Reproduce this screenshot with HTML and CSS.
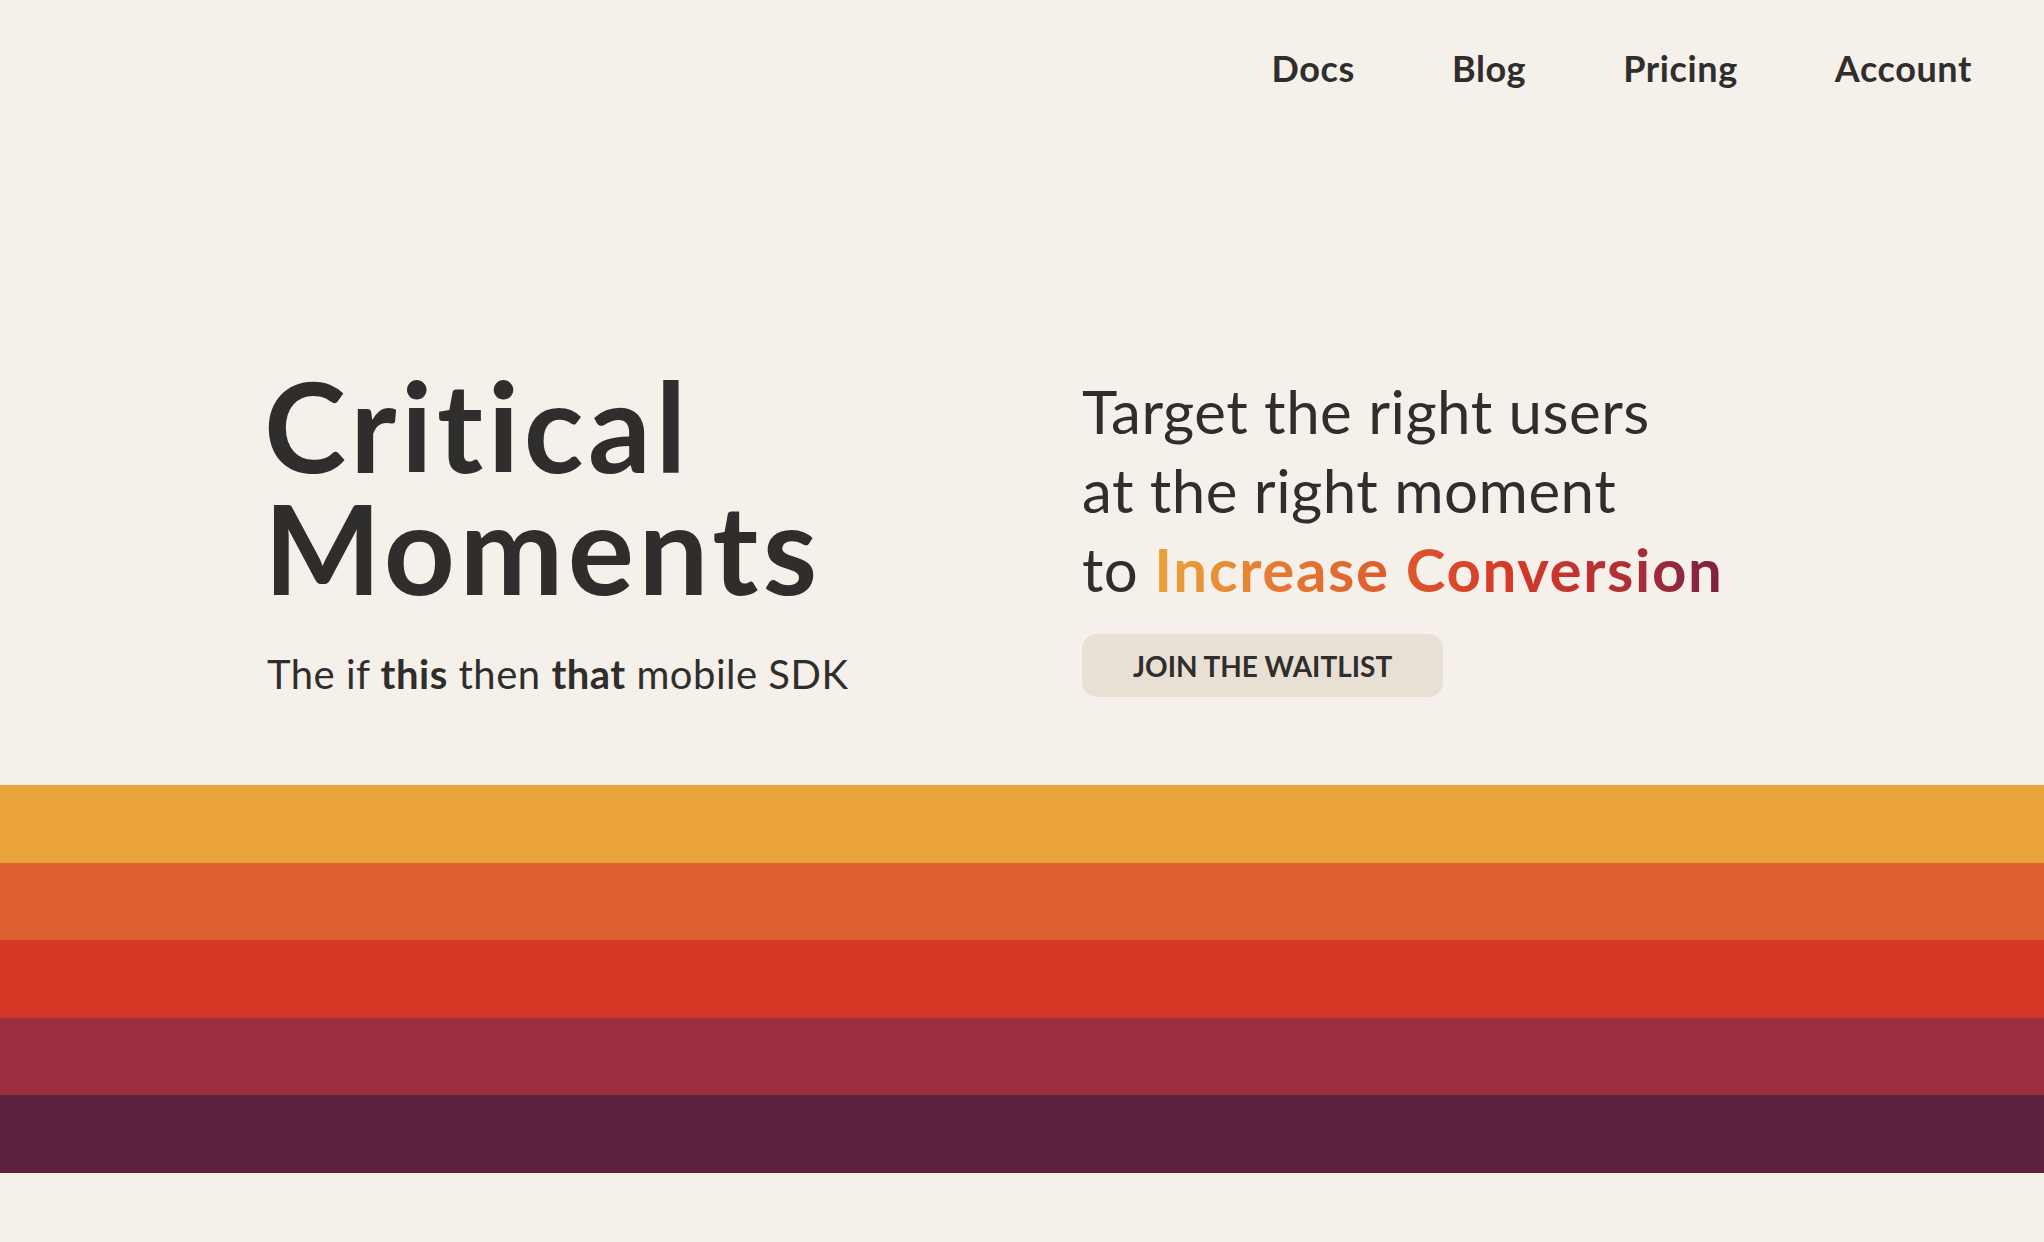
FILE: index.html
```html
<!DOCTYPE html>
<html lang="en">
<head>
<meta charset="utf-8">
<title>Critical Moments</title>
<link rel="stylesheet" href="styles.css">
</head>
<body>
<header class="site-header">
  <nav class="nav">
    <a class="nav-link" href="#">Docs</a>
    <a class="nav-link" href="#">Blog</a>
    <a class="nav-link" href="#">Pricing</a>
    <a class="nav-link" href="#">Account</a>
  </nav>
</header>
<main>
  <section class="hero">
    <div class="hero-left">
      <h1 class="title">Critical<br>Moments</h1>
      <p class="subtitle">The if <b>this</b> then <b>that</b> mobile SDK</p>
    </div>
    <div class="hero-right">
      <p class="pitch">Target the right users<br>at the right moment<br>to <span class="grad">Increase Conversion</span></p>
      <a class="btn" href="#">JOIN THE WAITLIST</a>
    </div>
  </section>
  <div class="stripes">
    <div class="stripe s1"></div>
    <div class="stripe s2"></div>
    <div class="stripe s3"></div>
    <div class="stripe s4"></div>
    <div class="stripe s5"></div>
  </div>
</main>
</body>
</html>
```
FILE: styles.css
```css
* { box-sizing: border-box; }
html, body { margin: 0; padding: 0; }
body {
  background: #f5f0ea;
  color: #2f2e2c;
  font-family: "Lato", "Noto Sans", sans-serif;
  font-variant-ligatures: none;
  min-height: 1242px;
}
.site-header {
  padding: 46px 72px 0 0;
}
.nav {
  display: flex;
  justify-content: flex-end;
  gap: 97px;
}
.nav-link {
  font-size: 36px;
  line-height: 44px;
  font-weight: 700;
  letter-spacing: 0.6px;
  color: #2f2e2c;
  text-decoration: none;
}
.hero {
  display: flex;
  align-items: flex-start;
  padding: 274px 0 87px 264px;
}
.hero-left {
  width: 818px;
  flex: none;
}
.title {
  margin: 0;
  font-size: 124px;
  line-height: 122px;
  font-weight: 700;
  letter-spacing: 4.5px;
}
.subtitle {
  margin: 42px 0 0 3px;
  font-size: 40px;
  line-height: 48px;
  font-weight: 400;
  letter-spacing: 0.5px;
}
.subtitle b { font-weight: 700; }
.hero-right {
  padding-top: 8px;
  display: flex;
  flex-direction: column;
  align-items: flex-start;
}
.pitch {
  margin: 0;
  font-size: 60px;
  line-height: 79px;
  font-weight: 400;
  letter-spacing: 0.5px;
}
.grad {
  font-weight: 700;
  letter-spacing: 1.6px;
  background: linear-gradient(90deg, #eba43a 0%, #e47a32 22%, #dd552d 45%, #d53a29 62%, #b22f36 82%, #7a2240 100%);
  -webkit-background-clip: text;
  background-clip: text;
  color: transparent;
}
.btn {
  margin-top: 25px;
  display: inline-flex;
  align-items: center;
  justify-content: center;
  height: 63px;
  padding: 0 51px;
  border-radius: 15px;
  background: #e8e0d4;
  color: #2f2e2c;
  font-size: 28px;
  font-weight: 700;
  text-decoration: none;
}
.stripes {
  display: grid;
  grid-template-rows: repeat(5, 1fr);
  height: 388px;
}
.s1 { background: #eaa23a; }
.s2 { background: #df602f; }
.s3 { background: #d63828; }
.s4 { background: #9c2e40; }
.s5 { background: #5c213d; }
```
